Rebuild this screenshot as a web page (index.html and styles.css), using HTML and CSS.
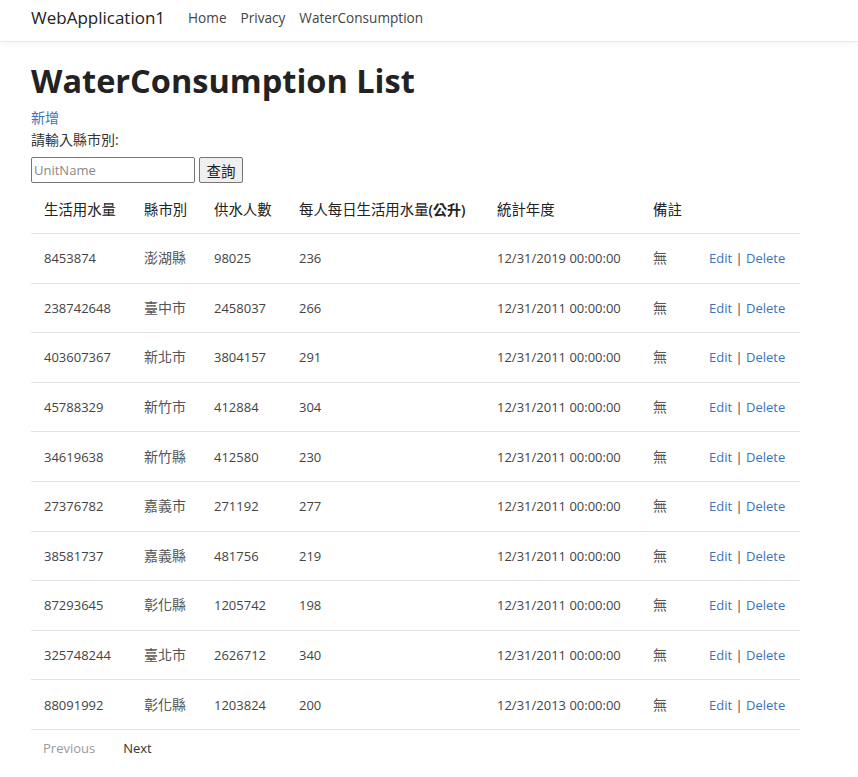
FILE: index.html
```html
<!DOCTYPE html>
<html lang="zh-Hant">
<head>
<meta charset="utf-8">
<title>WaterConsumption List</title>
<link rel="stylesheet" href="styles.css">
</head>
<body>
<header class="navbar">
  <a class="brand" href="#">WebApplication1</a>
  <nav class="nav">
    <a href="#">Home</a>
    <a href="#">Privacy</a>
    <a href="#">WaterConsumption</a>
  </nav>
</header>
<main class="container">
  <h1 class="title">WaterConsumption List</h1>
  <a class="link" href="#">新增</a>
  <div class="label">請輸入縣市別:</div>
  <form class="search">
    <input class="search-input" type="text" placeholder="UnitName">
    <button class="search-btn" type="button">查詢</button>
  </form>
  <table class="table">
    <thead>
      <tr>
        <th class="c1">生活用水量</th>
        <th class="c2">縣市別</th>
        <th class="c3">供水人數</th>
        <th class="c4">每人每日生活用水量<span class="strong">(公升)</span></th>
        <th class="c5">統計年度</th>
        <th class="c6">備註</th>
        <th class="c7"></th>
      </tr>
    </thead>
    <tbody>
      <tr><td>8453874</td><td class="zh">澎湖縣</td><td>98025</td><td>236</td><td>12/31/2019 00:00:00</td><td class="zh">無</td><td><a href="#">Edit</a> | <a href="#">Delete</a></td></tr>
      <tr><td>238742648</td><td class="zh">臺中市</td><td>2458037</td><td>266</td><td>12/31/2011 00:00:00</td><td class="zh">無</td><td><a href="#">Edit</a> | <a href="#">Delete</a></td></tr>
      <tr><td>403607367</td><td class="zh">新北市</td><td>3804157</td><td>291</td><td>12/31/2011 00:00:00</td><td class="zh">無</td><td><a href="#">Edit</a> | <a href="#">Delete</a></td></tr>
      <tr><td>45788329</td><td class="zh">新竹市</td><td>412884</td><td>304</td><td>12/31/2011 00:00:00</td><td class="zh">無</td><td><a href="#">Edit</a> | <a href="#">Delete</a></td></tr>
      <tr><td>34619638</td><td class="zh">新竹縣</td><td>412580</td><td>230</td><td>12/31/2011 00:00:00</td><td class="zh">無</td><td><a href="#">Edit</a> | <a href="#">Delete</a></td></tr>
      <tr><td>27376782</td><td class="zh">嘉義市</td><td>271192</td><td>277</td><td>12/31/2011 00:00:00</td><td class="zh">無</td><td><a href="#">Edit</a> | <a href="#">Delete</a></td></tr>
      <tr><td>38581737</td><td class="zh">嘉義縣</td><td>481756</td><td>219</td><td>12/31/2011 00:00:00</td><td class="zh">無</td><td><a href="#">Edit</a> | <a href="#">Delete</a></td></tr>
      <tr><td>87293645</td><td class="zh">彰化縣</td><td>1205742</td><td>198</td><td>12/31/2011 00:00:00</td><td class="zh">無</td><td><a href="#">Edit</a> | <a href="#">Delete</a></td></tr>
      <tr><td>325748244</td><td class="zh">臺北市</td><td>2626712</td><td>340</td><td>12/31/2011 00:00:00</td><td class="zh">無</td><td><a href="#">Edit</a> | <a href="#">Delete</a></td></tr>
      <tr><td>88091992</td><td class="zh">彰化縣</td><td>1203824</td><td>200</td><td>12/31/2013 00:00:00</td><td class="zh">無</td><td><a href="#">Edit</a> | <a href="#">Delete</a></td></tr>
    </tbody>
  </table>
  <div class="pager">
    <span class="pager-prev">Previous</span>
    <a class="pager-next" href="#">Next</a>
  </div>
</main>
</body>
</html>
```
FILE: styles.css
```css
* { box-sizing: border-box; }
html, body {
  margin: 0;
  padding: 0;
  background: #fff;
}
body {
  font-family: "Open Sans", "Noto Sans CJK TC", sans-serif;
  font-size: 13px;
  color: #333;
}
a { text-decoration: none; }

.navbar {
  height: 42px;
  display: flex;
  align-items: center;
  padding: 0 31px 6px;
  border-bottom: 1px solid #e8e8e8;
  box-shadow: 0 3px 6px rgba(0,0,0,0.04);
}
.brand {
  font-size: 17px;
  color: #222;
  margin-right: 23px;
  line-height: 1;
}
.nav {
  display: flex;
  gap: 14px;
}
.nav a {
  font-size: 13.6px;
  color: #444;
}

.container {
  padding: 19px 58px 0 31px;
}
.title {
  margin: 0;
  font-size: 32.5px;
  font-weight: 700;
  line-height: 40px;
  color: #222;
}
.link {
  display: block;
  color: #3a74bb;
  margin-top: 9px;
  line-height: 16px;
  font-size: 14px;
}
.label {
  margin-top: 6px;
  line-height: 16px;
  font-size: 14px;
}
.search {
  margin-top: 9px;
  display: flex;
  gap: 4px;
  height: 26px;
}
.search-input {
  width: 164px;
  height: 26px;
  border: 1px solid #767676;
  border-radius: 2px;
  font-family: inherit;
  font-size: 13px;
  padding: 0 2px;
  color: #333;
}
.search-input::placeholder { color: #888; }
.search-btn {
  width: 44px;
  height: 26px;
  border: 1px solid #767676;
  border-radius: 2px;
  background: #efefef;
  font-family: inherit;
  font-size: 14.5px;
  color: #222;
  padding: 0;
}

.table {
  width: 100%;
  border-collapse: collapse;
  margin-top: 3px;
}
.table th {
  text-align: left;
  font-weight: 400;
  font-size: 14.4px;
  line-height: 20px;
  padding: 14px 12px 13px 13px;
  color: #222;
  border-bottom: 1px solid #e3e3e3;
  white-space: nowrap;
}
.table th .strong { font-weight: 600; font-size: 14px; }
.table td {
  padding: 14.3px 12px 14.3px 13px;
  line-height: 20px;
  border-bottom: 1px solid #e3e3e3;
  white-space: nowrap;
  color: #444;
}
.table td.zh { font-size: 14px; color: #555; }
.table td a { color: #3a74bb; }
.c1 { width: 100px; }
.c2 { width: 70px; }
.c3 { width: 85px; }
.c4 { width: 198px; }
.c5 { width: 156px; }
.c6 { width: 56px; }

.pager {
  display: flex;
  gap: 28px;
  padding: 8px 12px;
  line-height: 20px;
}
.pager-prev { color: #999; }
.pager-next { color: #333; }
```
